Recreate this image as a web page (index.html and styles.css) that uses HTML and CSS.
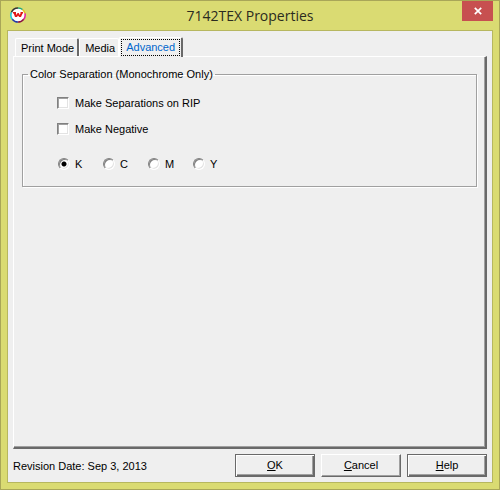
FILE: index.html
```
<!DOCTYPE html>
<html lang="en">
<head>
    <meta charset="UTF-8">
    <meta name="viewport" content="width=device-width, initial-scale=1.0">
    <title>7142TEX Properties</title>
    <link rel="stylesheet" href="styles.css">
</head>
<body>
    <div class="window">
        <header class="titlebar">
            <svg class="app-icon" viewBox="0 0 16 16" aria-hidden="true">
                <circle cx="8" cy="8" r="7" fill="#fff"/>
                <g fill="none" stroke-width="1.5">
                    <path d="M8 .9A7.1 7.1 0 0 0 1.4 5.4" stroke="#333"/>
                    <path d="M1.4 5.4A7.1 7.1 0 0 0 2.3 12.3" stroke="#18c8e0"/>
                    <path d="M2.3 12.3A7.1 7.1 0 0 0 8 15.1" stroke="#2438a8"/>
                    <path d="M8 15.1A7.1 7.1 0 0 0 13.7 12.3" stroke="#8a1040"/>
                    <path d="M13.7 12.3A7.1 7.1 0 0 0 14.9 6.2" stroke="#e020a0"/>
                    <path d="M14.9 6.2A7.1 7.1 0 0 0 12.5 2.5" stroke="#e8c020"/>
                    <path d="M12.5 2.5A7.1 7.1 0 0 0 8 .9" stroke="#20a878"/>
                </g>
                <path d="M3 5h3v1.500L6.500 8l1-2h1.200l1 2 .8-1.500V5H13v1.500h-.5L11 10H9.200L8 8.500 7 10H5L3.700 6.500H3z" fill="#e01818"/>
            </svg>
            <h1>7142TEX Properties</h1>
            <button class="close" type="button" aria-label="Close">
                <svg viewBox="0 0 8 8" aria-hidden="true"><path d="M.8 .8l6.400 6.400M7.200 .8L.8 7.200" stroke="#fff" stroke-width="1.700"/></svg>
            </button>
        </header>

        <form class="client">
            <div class="tabs" role="tablist">
                <button class="tab" type="button" role="tab">Print Mode</button>
                <button class="tab" type="button" role="tab">Media</button>
                <button class="tab active" type="button" role="tab" aria-selected="true"><span>Advanced</span></button>
            </div>

            <div class="panel" role="tabpanel">
                <fieldset class="group">
                    <legend>Color Separation (Monochrome Only)</legend>
                    <label class="option"><input type="checkbox">Make Separations on RIP</label>
                    <label class="option"><input type="checkbox">Make Negative</label>
                    <div class="channels">
                        <label class="option"><input type="radio" name="channel" checked>K</label>
                        <label class="option"><input type="radio" name="channel">C</label>
                        <label class="option"><input type="radio" name="channel">M</label>
                        <label class="option"><input type="radio" name="channel">Y</label>
                    </div>
                </fieldset>
            </div>

            <footer class="footer">
                <p>Revision Date: Sep 3, 2013</p>
                <button class="btn framed" type="button"><u>O</u>K</button>
                <button class="btn" type="button"><u>C</u>ancel</button>
                <button class="btn framed" type="button"><u>H</u>elp</button>
            </footer>
        </form>
    </div>
</body>
</html>
```
FILE: styles.css
```
* {
    box-sizing: border-box;
}

body {
    margin: 0;
    font-family: "Liberation Sans", Arial, sans-serif;
    font-size: 11px;
    line-height: 14px;
    color: #000;
}

button {
    font: inherit;
    color: inherit;
}

.window {
    display: flex;
    flex-direction: column;
    min-height: 100vh;
    padding: 0 6px 6px;
    border: 1px solid #a9a658;
    background-color: #dadb72;
}

.titlebar {
    display: grid;
    grid-template-columns: 48px 1fr 48px;
    height: 29px;
}

.titlebar h1 {
    margin: 0;
    font-family: "Open Sans", "Noto Sans", sans-serif;
    font-size: 14px;
    font-weight: normal;
    line-height: 29px;
    text-align: center;
    color: #2b2b20;
}

.app-icon {
    width: 16px;
    height: 16px;
    margin: 6px 3px;
}

.close {
    justify-self: end;
    width: 31px;
    height: 20px;
    padding: 0;
    border: none;
    background-color: #c75050;
}

.close svg {
    display: block;
    width: 8px;
    height: 8px;
    margin: auto;
}

.client {
    flex: 1;
    display: flex;
    flex-direction: column;
    padding: 6px 5px 5px;
    border: 1px solid #b7b75f;
    background-color: #efefef;
}

.tabs {
    display: flex;
    align-items: flex-end;
    padding-left: 2px;
}

.tab {
    height: 18px;
    padding: 1px 3px 0 5px;
    border: 1px solid #fff;
    border-right: 2px solid #696969;
    border-bottom: none;
    border-radius: 2px 2px 0 0;
    background-color: #efefef;
    white-space: nowrap;
}

.tab:nth-child(2) {
    border-right: 1px solid #fff;
}

.tab.active {
    height: 20px;
    margin-bottom: -1px;
    padding: 0 1px;
    color: #0066cc;
    z-index: 1;
}

.tab.active span {
    display: block;
    padding: 0 4px 1px;
    border: 1px dotted #000;
}

.panel {
    flex: 1;
    padding: 10px 8px;
    border: 1px solid #fff;
    border-right: 2px solid #696969;
    border-bottom: 2px solid #696969;
    box-shadow: inset -1px -1px #a0a0a0;
}

.group {
    margin: 0;
    padding: 15px 34px;
    border: 1px solid #a0a0a0;
    box-shadow: 1px 1px #fff, inset 1px 1px #fff;
}

.group legend {
    margin-left: -29px;
    padding: 0 2px;
}

.option {
    display: flex;
    align-items: center;
    gap: 6px;
    margin-bottom: 12px;
}

.option input {
    appearance: none;
    width: 12px;
    height: 12px;
    margin: 0;
    border: 1px solid;
    border-color: #808080 #fff #fff #808080;
    background-color: #fff;
    box-shadow: inset 1px 1px #a0a0a0, inset -1px -1px #e3e3e3;
}

.option input[type="radio"] {
    border-radius: 50%;
    box-shadow: inset 1px 1px #808080, inset -1px -1px #e3e3e3;
}

.option input[type="radio"]:checked {
    background-image: radial-gradient(circle, #000 2px, transparent 3px);
}

.channels {
    display: grid;
    grid-template-columns: repeat(4, 45px);
    padding: 9px 0 0 1px;
}

.channels .option {
    gap: 5px;
    margin: 0;
}

.footer {
    display: flex;
    align-items: center;
    gap: 6px;
    padding-top: 5px;
}

.footer p {
    flex: 1;
    margin: 0;
}

.btn {
    width: 80px;
    height: 23px;
    padding: 0 0 2px;
    border: 1px solid;
    border-color: #fff #696969 #696969 #fff;
    background-color: #efefef;
    box-shadow: inset -1px -1px #a0a0a0;
}

.btn.framed {
    border-color: #696969;
    box-shadow: inset 1px 1px #fff, inset -1px -1px #696969, inset -2px -2px #a0a0a0;
}
```
